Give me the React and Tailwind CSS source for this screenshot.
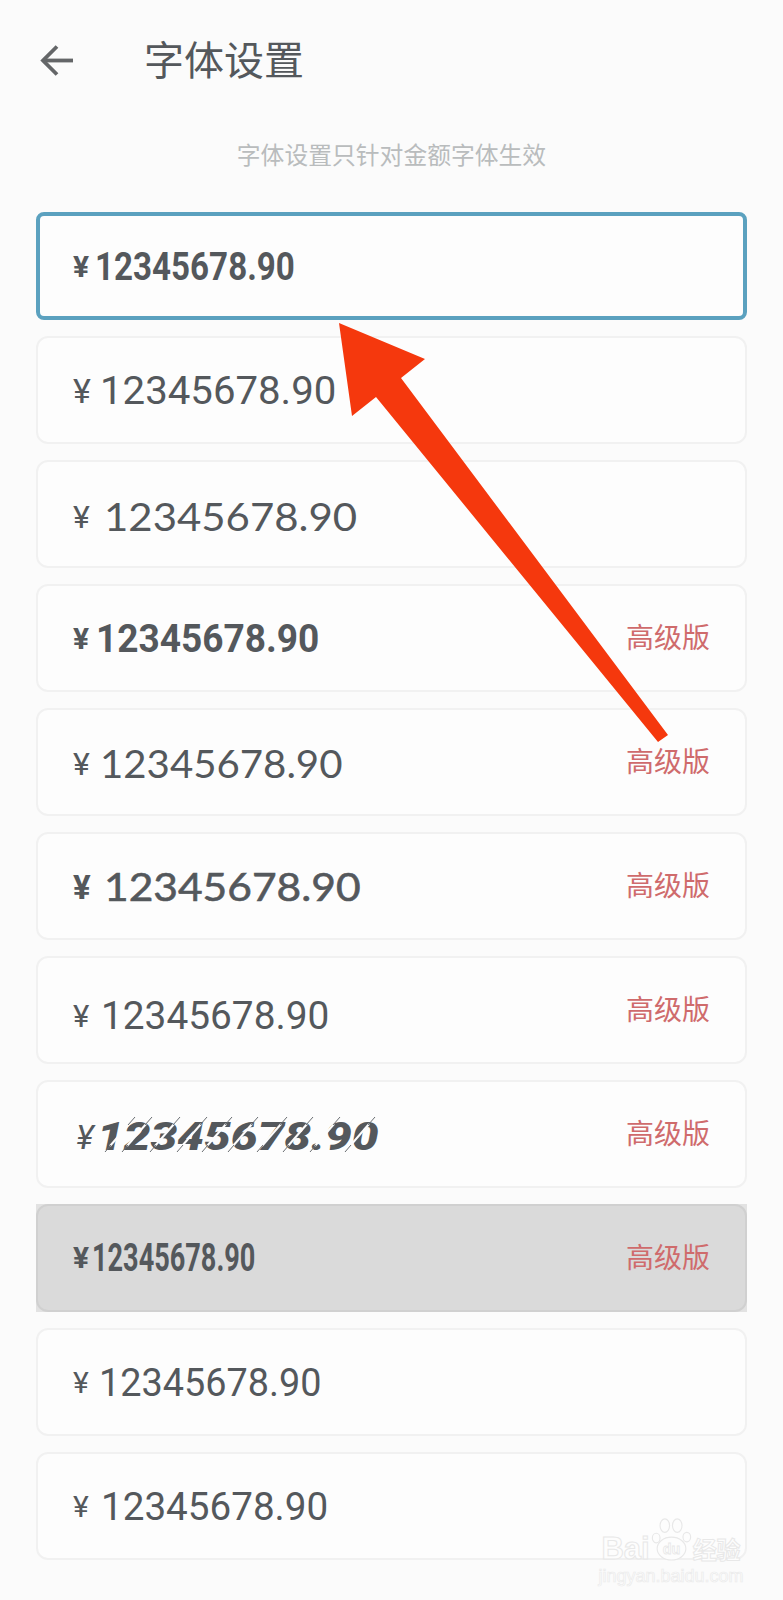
const money = [
  { font: "font-['Roboto',sans-serif] font-bold", squeeze: "scale-x-[0.85]", gap: "ml-1", yen: "text-[30px] font-bold", shift: "translate-y-[1px]" },
  { font: "font-['Roboto',sans-serif]", squeeze: "scale-x-[1.03]", gap: "ml-[9px]", yen: "text-[34px]", shift: "translate-y-[1px]" },
  { font: "font-['Lato',sans-serif]", squeeze: "scale-x-[1.075]", gap: "ml-[13px]", yen: "text-[32px]", shift: "translate-y-[3px]" },
  { font: "font-['Roboto',sans-serif] font-bold", squeeze: "scale-x-[0.95]", gap: "ml-[5px]", yen: "text-[30px] font-bold", shift: "translate-y-[1px]", pro: true },
  { font: "font-['Lato',sans-serif]", squeeze: "scale-x-[1.03]", gap: "ml-[9px]", yen: "text-[32px]", shift: "translate-y-[2px]", pro: true },
  { font: "font-['Lato',sans-serif] [-webkit-text-stroke:0.6px_#54585c]", squeeze: "scale-x-[1.09]", gap: "ml-[13px]", yen: "text-[33px] font-bold", shift: "translate-y-[1px]", pro: true },
  { font: "font-['Roboto',sans-serif]", squeeze: "scale-x-[0.995]", gap: "ml-[10px]", yen: "text-[31px]", shift: "translate-y-[6px]", pro: true },
  { font: "font-['Roboto',sans-serif] font-black italic", squeeze: "scale-x-[1.22]", gap: "ml-[6px]", yen: "text-[34px] italic pl-[3px]", shift: "translate-y-[3px]", pro: true, slashed: true },
  { font: "font-['Roboto',sans-serif] font-bold", squeeze: "scale-x-[0.695]", gap: "ml-[1px]", yen: "text-[30px] font-bold", shift: "", pro: true, pressed: true },
  { font: "font-['Roboto',sans-serif]", squeeze: "scale-x-[0.97]", gap: "ml-2", yen: "text-[30px]", shift: "translate-y-[1px]" },
  { font: "font-['Roboto',sans-serif]", squeeze: "scale-x-[0.99]", gap: "ml-[10px]", yen: "text-[30px]", shift: "translate-y-[1px]" },
];

function FontRow({ item, selected }) {
  let box = "border-2 border-[#f1f1f1] rounded-xl bg-[#fdfdfd] pl-[35px]";
  if (selected) box = "border-4 border-[#5ba1bf] rounded-lg bg-[#fdfdfd] pl-[33px]";
  if (item.pressed) box = "border-2 border-[#d0d0d0] rounded-xl bg-[#dadada] pl-[35px]";

  return (
    <div className={item.pressed ? "bg-[#e2e2e2]" : ""}>
      <div className={`flex h-[108px] items-center justify-between pr-[35px] ${box}`}>
        <div className={`flex items-center text-[#54585c] ${item.shift}`}>
          <span className={`w-[18px] font-['Roboto',sans-serif] leading-none ${item.yen}`}>¥</span>
          <div className={`relative w-[280px] ${item.gap}`}>
            <span className={`inline-block origin-left whitespace-nowrap text-[39px] leading-none ${item.font} ${item.squeeze}`}>
              12345678.90
            </span>
            {item.slashed && <Slashes />}
          </div>
        </div>
        {item.pro && <span className="mb-1 font-['Noto_Sans_CJK_SC',sans-serif] text-[28px] leading-none text-[#cf6b6c]">高级版</span>}
      </div>
    </div>
  );
}

// cuts across the slanted digits, with thin tips sticking out at both ends
function Slashes() {
  const marks = [8, 25, 53, 80, 105, 131, 160, 186, 213, 248];
  return (
    <svg className="absolute left-0 top-[-6px]" width="290" height="50" viewBox="0 0 290 50" fill="none">
      {marks.map((x) => (
        <g key={x}>
          <path d={`M${x + 5} ${34}L${x + 24} ${12}`} stroke="#fdfdfd" strokeWidth="2" />
          <path d={`M${x} ${40}L${x + 6} ${33}`} stroke="#6a6e72" strokeWidth="1" />
          <path d={`M${x + 23} ${13}L${x + 30} ${5}`} stroke="#6a6e72" strokeWidth="1" />
        </g>
      ))}
    </svg>
  );
}

function Watermark() {
  return (
    <div className="absolute left-[600px] top-[1517px] flex w-[142px] flex-col items-center">
      <div className="flex items-end">
        <span className="font-['Liberation_Sans',sans-serif] text-[31px] font-bold leading-[24px] text-[#fdfdfd] [-webkit-text-stroke:1px_#e8e8e8]">Bai</span>
        <svg width="43" height="44" viewBox="0 0 44 46" fill="#fdfdfd" stroke="#e8e8e8" strokeWidth="1.2">
          <ellipse cx="6" cy="22" rx="4" ry="5" />
          <ellipse cx="15" cy="9" rx="5" ry="7" />
          <ellipse cx="28" cy="9" rx="5" ry="7" />
          <ellipse cx="38" cy="21" rx="4" ry="5" />
          <ellipse cx="22" cy="33" rx="15" ry="12" />
          <text x="22" y="39" textAnchor="middle" fontSize="15" fontFamily="Liberation Sans" fontWeight="700" fill="none" strokeWidth="0.8">du</text>
        </svg>
        <span className="font-['Noto_Sans_CJK_SC',sans-serif] text-[24px] font-bold leading-[24px] text-[#fdfdfd] [-webkit-text-stroke:1px_#e8e8e8]">经验</span>
      </div>
      <span className="mt-[6px] font-['Liberation_Sans',sans-serif] text-[18px] leading-none text-[#fdfdfd] [-webkit-text-stroke:0.7px_#ebebeb]">jingyan.baidu.com</span>
    </div>
  );
}

export default function App() {
  return (
    <div className="relative h-[1600px] w-[783px] overflow-hidden bg-[#fbfbfb]">
      <header className="flex h-[120px] items-center pl-10">
        <svg width="33" height="33" viewBox="0 0 33 33" fill="none" stroke="#646668" strokeWidth="3.8">
          <path d="M33 16.5H3" />
          <path d="M17 2.5 3 16.5l14 14" />
        </svg>
        <h1 className="mb-1 ml-[71px] font-['Noto_Sans_CJK_SC',sans-serif] text-[40px] font-normal leading-none text-[#54585c]">字体设置</h1>
      </header>

      <p className="mt-[22px] text-center font-['Noto_Sans_CJK_SC',sans-serif] text-[23.8px] leading-[24px] text-[#b9bcbd]">字体设置只针对金额字体生效</p>

      <div className="mt-[46px] flex flex-col gap-4 px-9">
        {money.map((item, i) => (
          <FontRow key={i} item={item} selected={i === 0} />
        ))}
      </div>

      {/* annotation arrow drawn over the screenshot */}
      <svg className="absolute left-0 top-0" width="783" height="1600" viewBox="0 0 783 1600">
        <polygon points="339,323 425,359 401,378 668,735 658,742 376,397 352,416" fill="#f5380d" />
      </svg>

      <Watermark />
    </div>
  );
}
